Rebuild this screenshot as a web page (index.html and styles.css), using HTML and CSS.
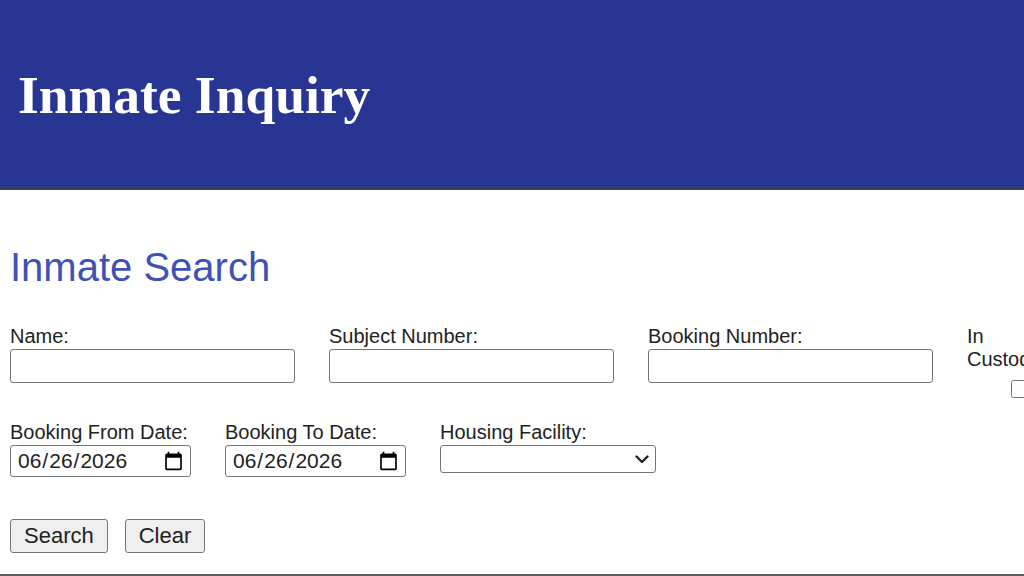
FILE: index.html
```html
<!DOCTYPE html>
<html lang="en">
<head>
    <meta charset="UTF-8">
    <meta name="viewport" content="width=device-width, initial-scale=1.0">
    <title>Inmate Inquiry</title>
    <link rel="stylesheet" href="styles.css">
</head>
<body>
    <div class="page-header">
        <h1>Inmate Inquiry</h1>
    </div>

    <div class="content">
        <h2 class="search-title">Inmate Search</h2>

        <form class="search-form" onsubmit="return false;">
            <div class="row row-top">
                <div class="field">
                    <label for="name">Name:</label>
                    <input type="text" id="name" class="text-input">
                </div>
                <div class="field">
                    <label for="subject">Subject Number:</label>
                    <input type="text" id="subject" class="text-input">
                </div>
                <div class="field">
                    <label for="booking">Booking Number:</label>
                    <input type="text" id="booking" class="text-input">
                </div>
                <div class="field custody">
                    <label for="custody">In Custody:</label>
                    <input type="checkbox" id="custody" class="check">
                </div>
            </div>

            <div class="row row-dates">
                <div class="field">
                    <label for="fromDate">Booking From Date:</label>
                    <input type="date" id="fromDate" class="date-input" value="2026-06-26">
                </div>
                <div class="field">
                    <label for="toDate">Booking To Date:</label>
                    <input type="date" id="toDate" class="date-input" value="2026-06-26">
                </div>
                <div class="field">
                    <label for="facility">Housing Facility:</label>
                    <div class="select-wrap">
                        <select id="facility" class="select-input">
                            <option value=""></option>
                        </select>
                        <svg class="select-arrow" width="14" height="9" viewBox="0 0 14 9">
                            <path d="M1.5 1.5 L7 7 L12.5 1.5" fill="none" stroke="#222" stroke-width="2.4" stroke-linecap="round" stroke-linejoin="round"/>
                        </svg>
                    </div>
                </div>
            </div>

            <div class="actions">
                <button type="submit">Search</button>
                <button type="reset">Clear</button>
            </div>
        </form>
    </div>

    <div class="footer"></div>
</body>
</html>
```

FILE: styles.css
```css
body {
    font-family: "Liberation Sans", Arial, sans-serif;
    margin: 0;
    padding: 0;
    background-color: #fff;
    color: #222;
    overflow-x: hidden;
}
.page-header {
    background-color: #283593;
    height: 187px;
    border-bottom: 3px solid #404040;
    display: flex;
    align-items: center;
    padding: 0 18px;
}
.page-header h1 {
    font-family: "Liberation Serif", "Times New Roman", serif;
    font-size: 53.5px;
    font-weight: bold;
    color: #fff;
    margin: 0;
    padding-top: 2px;
}
.content {
    padding: 0 10px;
}
.search-title {
    font-size: 40px;
    font-weight: normal;
    color: #3f51b5;
    margin: 54px 0 35px;
    line-height: 46px;
}
.row {
    display: flex;
    align-items: flex-start;
    gap: 34px;
}
.row-top {
    margin-bottom: 23px;
}
.field {
    flex-shrink: 0;
}
.field label {
    display: block;
    font-size: 20px;
    line-height: 23px;
    margin-bottom: 2px;
}
.row-top .field label {
    margin-bottom: 1px;
}
.text-input {
    width: 285px;
    height: 34px;
    box-sizing: border-box;
    border: 1px solid #767676;
    border-radius: 3px;
    font-size: 20px;
    padding: 0 6px;
}
.custody {
    width: 96px;
}
.custody .check {
    display: block;
    width: 18px;
    height: 18px;
    margin: 9px 0 0 44px;
}
.date-input {
    width: 181px;
    height: 32px;
    box-sizing: border-box;
    border: 1px solid #767676;
    border-radius: 3px;
    font-family: "Liberation Sans", Arial, sans-serif;
    font-size: 21px;
    padding: 0 4px 0 6px;
    color: #222;
}
.row-dates .field label {
    margin-bottom: 1px;
}
.select-wrap {
    position: relative;
    width: 216px;
}
.select-input {
    display: block;
    width: 216px;
    height: 28px;
    box-sizing: border-box;
    border: 1px solid #767676;
    border-radius: 3px;
    font-size: 20px;
    background-color: #fff;
    appearance: none;
    -webkit-appearance: none;
    padding: 0 30px 0 6px;
}
.select-arrow {
    position: absolute;
    right: 7px;
    top: 10px;
    pointer-events: none;
}
.actions {
    display: flex;
    gap: 17px;
    margin-top: 42px;
}
.actions button {
    height: 34px;
    padding: 0 13px;
    font-family: "Liberation Sans", Arial, sans-serif;
    font-size: 22px;
    color: #222;
    background-color: #efefef;
    border: 1px solid #767676;
    border-radius: 3px;
    cursor: pointer;
}
.actions button:hover {
    background-color: #e5e5e5;
}
.footer {
    margin-top: 21px;
    border-top: 2px solid #5a5a5a;
}
```
